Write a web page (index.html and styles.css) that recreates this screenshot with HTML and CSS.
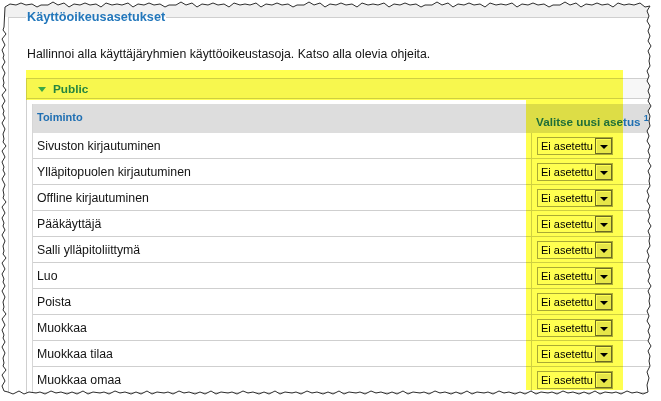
FILE: index.html
```html
<!DOCTYPE html>
<html lang="fi">
<head>
<meta charset="utf-8">
<title>Käyttöoikeusasetukset</title>
<link rel="stylesheet" href="styles.css">
</head>
<body>
<div class="page">
  <fieldset class="perm">
    <legend class="perm-legend">Käyttöoikeusasetukset</legend>
    <p class="intro">Hallinnoi alla käyttäjäryhmien käyttöoikeustasoja. Katso alla olevia ohjeita.</p>
    <div class="panel">
      <div class="panel-head"><span class="tri"></span>Public</div>
      <div class="panel-body">
        <table class="perm-table">
          <thead>
            <tr>
              <th class="th-act">Toiminto</th>
              <th class="th-set">Valitse uusi asetus <sup class="note">1</sup></th>
            </tr>
          </thead>
          <tbody>
            <tr><td class="c-act">Sivuston kirjautuminen</td><td class="c-set"><div class="sel"><span class="sel-text">Ei asetettu</span><span class="sel-btn"></span></div></td></tr>
            <tr><td class="c-act">Ylläpitopuolen kirjautuminen</td><td class="c-set"><div class="sel"><span class="sel-text">Ei asetettu</span><span class="sel-btn"></span></div></td></tr>
            <tr><td class="c-act">Offline kirjautuminen</td><td class="c-set"><div class="sel"><span class="sel-text">Ei asetettu</span><span class="sel-btn"></span></div></td></tr>
            <tr><td class="c-act">Pääkäyttäjä</td><td class="c-set"><div class="sel"><span class="sel-text">Ei asetettu</span><span class="sel-btn"></span></div></td></tr>
            <tr><td class="c-act">Salli ylläpitoliittymä</td><td class="c-set"><div class="sel"><span class="sel-text">Ei asetettu</span><span class="sel-btn"></span></div></td></tr>
            <tr><td class="c-act">Luo</td><td class="c-set"><div class="sel"><span class="sel-text">Ei asetettu</span><span class="sel-btn"></span></div></td></tr>
            <tr><td class="c-act">Poista</td><td class="c-set"><div class="sel"><span class="sel-text">Ei asetettu</span><span class="sel-btn"></span></div></td></tr>
            <tr><td class="c-act">Muokkaa</td><td class="c-set"><div class="sel"><span class="sel-text">Ei asetettu</span><span class="sel-btn"></span></div></td></tr>
            <tr><td class="c-act">Muokkaa tilaa</td><td class="c-set"><div class="sel"><span class="sel-text">Ei asetettu</span><span class="sel-btn"></span></div></td></tr>
            <tr><td class="c-act">Muokkaa omaa</td><td class="c-set"><div class="sel"><span class="sel-text">Ei asetettu</span><span class="sel-btn"></span></div></td></tr>
          </tbody>
        </table>
      </div>
    </div>
  </fieldset>
</div>

<div class="hl hl-head"></div>
<div class="hl hl-col"></div>

<svg class="torn" width="661" height="401" viewBox="0 0 661 401" aria-hidden="true">
  <path class="torn-mask" fill-rule="evenodd" d="M0,0H661V401H0Z M5,7 l5,-3 6,1 5,-2 5,2 6,-1 5,3 l4,-2 7,0 5,-3 5,3 6,-2 5,4 l5,-3 6,1 5,-2 5,2 6,-1 5,3 l5,-4 6,2 5,-1 5,1 6,-2 5,4 l5,-3 6,1 5,-2 5,2 6,-1 5,3 l4,-2 7,0 5,-3 5,3 6,-2 5,4 l5,-3 6,1 5,-2 5,2 6,-1 5,3 l5,-4 6,2 5,-1 5,1 6,-2 5,4 l5,-3 6,1 5,-2 5,2 6,-1 5,3 l4,-2 7,0 5,-3 5,3 6,-2 5,4 l5,-3 6,1 5,-2 5,2 6,-1 5,3 l5,-4 6,2 5,-1 5,1 6,-2 5,4 l5,-3 6,1 5,-2 5,2 6,-1 5,3 l4,-2 7,0 5,-3 5,3 6,-2 5,4 l5,-3 6,1 5,-2 5,2 6,-1 5,3 l5,-4 6,2 5,-1 5,1 6,-2 5,4 l5,-3 6,1 5,-2 5,2 6,-1 5,3 l4,-2 7,0 5,-3 5,3 6,-2 5,4 l5,-3 6,1 5,-2 5,2 6,-1 5,3 l5,-4 6,2 5,-1 5,1 6,-2 5,4 L650,6 l-3,5 2,5 -2,5 3,5 -2,5 2,5 l-2,5 3,5 -3,5 2,5 -1,5 1,5 l-3,5 2,5 -2,5 3,5 -2,5 2,5 l-2,5 3,5 -3,5 2,5 -1,5 1,5 l-3,5 2,5 -2,5 3,5 -2,5 2,5 l-2,5 3,5 -3,5 2,5 -1,5 1,5 l-3,5 2,5 -2,5 3,5 -2,5 2,5 l-2,5 3,5 -3,5 2,5 -1,5 1,5 l-3,5 2,5 -2,5 3,5 -2,5 2,5 l-2,5 3,5 -3,5 2,5 -1,5 1,5 l-3,5 2,5 -2,5 3,5 -2,5 2,5 l-2,5 3,5 -3,5 2,5 -1,5 1,5 l-3,6 2,6 -2,7 1,7 l-5,2 -6,-2 -5,1 -5,-2 -6,3 -5,-2 l-4,1 -7,-1 -5,2 -5,-3 -6,3 -5,-2 l-5,2 -6,-2 -5,1 -5,-2 -6,3 -5,-2 l-4,1 -7,-1 -5,2 -5,-3 -6,3 -5,-2 l-5,2 -6,-2 -5,1 -5,-2 -6,3 -5,-2 l-4,1 -7,-1 -5,2 -5,-3 -6,3 -5,-2 l-5,2 -6,-2 -5,1 -5,-2 -6,3 -5,-2 l-4,1 -7,-1 -5,2 -5,-3 -6,3 -5,-2 l-5,2 -6,-2 -5,1 -5,-2 -6,3 -5,-2 l-4,1 -7,-1 -5,2 -5,-3 -6,3 -5,-2 l-5,2 -6,-2 -5,1 -5,-2 -6,3 -5,-2 l-4,1 -7,-1 -5,2 -5,-3 -6,3 -5,-2 l-5,2 -6,-2 -5,1 -5,-2 -6,3 -5,-2 l-4,1 -7,-1 -5,2 -5,-3 -6,3 -5,-2 l-5,2 -6,-2 -5,1 -5,-2 -6,3 -5,-2 l-4,1 -7,-1 -5,2 -5,-3 -6,3 -5,-2 l-5,2 -6,-2 -5,1 -5,-2 -6,3 -5,-2 l-4,1 -7,-1 -5,2 -5,-3 -6,3 -5,-2 l-5,2 -6,-2 -5,1 -5,-2 -6,3 -5,-2 l-4,1 -7,-1 -5,2 -5,-3 -6,3 -5,-2 L4,391 l-2,-5 3,-5 -3,-6 4,-5 -3,-4 1,-3 l-1,-5 2,-5 -3,-6 3,-5 -2,-4 1,-3 l-2,-5 3,-5 -3,-6 4,-5 -3,-4 1,-3 l-1,-5 2,-5 -3,-6 3,-5 -2,-4 1,-3 l-2,-5 3,-5 -3,-6 4,-5 -3,-4 1,-3 l-1,-5 2,-5 -3,-6 3,-5 -2,-4 1,-3 l-2,-5 3,-5 -3,-6 4,-5 -3,-4 1,-3 l-1,-5 2,-5 -3,-6 3,-5 -2,-4 1,-3 l-2,-5 3,-5 -3,-6 4,-5 -3,-4 1,-3 l-1,-5 2,-5 -3,-6 3,-5 -2,-4 1,-3 l-2,-5 3,-5 -3,-6 4,-5 -3,-4 1,-3 l-1,-5 2,-5 -3,-6 3,-5 -2,-4 1,-3 l-2,-5 3,-5 -3,-6 4,-5 -3,-4 1,-3 Z"/>
  <path class="torn-line" d="M5,7 l5,-3 6,1 5,-2 5,2 6,-1 5,3 l4,-2 7,0 5,-3 5,3 6,-2 5,4 l5,-3 6,1 5,-2 5,2 6,-1 5,3 l5,-4 6,2 5,-1 5,1 6,-2 5,4 l5,-3 6,1 5,-2 5,2 6,-1 5,3 l4,-2 7,0 5,-3 5,3 6,-2 5,4 l5,-3 6,1 5,-2 5,2 6,-1 5,3 l5,-4 6,2 5,-1 5,1 6,-2 5,4 l5,-3 6,1 5,-2 5,2 6,-1 5,3 l4,-2 7,0 5,-3 5,3 6,-2 5,4 l5,-3 6,1 5,-2 5,2 6,-1 5,3 l5,-4 6,2 5,-1 5,1 6,-2 5,4 l5,-3 6,1 5,-2 5,2 6,-1 5,3 l4,-2 7,0 5,-3 5,3 6,-2 5,4 l5,-3 6,1 5,-2 5,2 6,-1 5,3 l5,-4 6,2 5,-1 5,1 6,-2 5,4 l5,-3 6,1 5,-2 5,2 6,-1 5,3 l4,-2 7,0 5,-3 5,3 6,-2 5,4 l5,-3 6,1 5,-2 5,2 6,-1 5,3 l5,-4 6,2 5,-1 5,1 6,-2 5,4 L650,6 l-3,5 2,5 -2,5 3,5 -2,5 2,5 l-2,5 3,5 -3,5 2,5 -1,5 1,5 l-3,5 2,5 -2,5 3,5 -2,5 2,5 l-2,5 3,5 -3,5 2,5 -1,5 1,5 l-3,5 2,5 -2,5 3,5 -2,5 2,5 l-2,5 3,5 -3,5 2,5 -1,5 1,5 l-3,5 2,5 -2,5 3,5 -2,5 2,5 l-2,5 3,5 -3,5 2,5 -1,5 1,5 l-3,5 2,5 -2,5 3,5 -2,5 2,5 l-2,5 3,5 -3,5 2,5 -1,5 1,5 l-3,5 2,5 -2,5 3,5 -2,5 2,5 l-2,5 3,5 -3,5 2,5 -1,5 1,5 l-3,6 2,6 -2,7 1,7 l-5,2 -6,-2 -5,1 -5,-2 -6,3 -5,-2 l-4,1 -7,-1 -5,2 -5,-3 -6,3 -5,-2 l-5,2 -6,-2 -5,1 -5,-2 -6,3 -5,-2 l-4,1 -7,-1 -5,2 -5,-3 -6,3 -5,-2 l-5,2 -6,-2 -5,1 -5,-2 -6,3 -5,-2 l-4,1 -7,-1 -5,2 -5,-3 -6,3 -5,-2 l-5,2 -6,-2 -5,1 -5,-2 -6,3 -5,-2 l-4,1 -7,-1 -5,2 -5,-3 -6,3 -5,-2 l-5,2 -6,-2 -5,1 -5,-2 -6,3 -5,-2 l-4,1 -7,-1 -5,2 -5,-3 -6,3 -5,-2 l-5,2 -6,-2 -5,1 -5,-2 -6,3 -5,-2 l-4,1 -7,-1 -5,2 -5,-3 -6,3 -5,-2 l-5,2 -6,-2 -5,1 -5,-2 -6,3 -5,-2 l-4,1 -7,-1 -5,2 -5,-3 -6,3 -5,-2 l-5,2 -6,-2 -5,1 -5,-2 -6,3 -5,-2 l-4,1 -7,-1 -5,2 -5,-3 -6,3 -5,-2 l-5,2 -6,-2 -5,1 -5,-2 -6,3 -5,-2 l-4,1 -7,-1 -5,2 -5,-3 -6,3 -5,-2 l-5,2 -6,-2 -5,1 -5,-2 -6,3 -5,-2 l-4,1 -7,-1 -5,2 -5,-3 -6,3 -5,-2 L4,391 l-2,-5 3,-5 -3,-6 4,-5 -3,-4 1,-3 l-1,-5 2,-5 -3,-6 3,-5 -2,-4 1,-3 l-2,-5 3,-5 -3,-6 4,-5 -3,-4 1,-3 l-1,-5 2,-5 -3,-6 3,-5 -2,-4 1,-3 l-2,-5 3,-5 -3,-6 4,-5 -3,-4 1,-3 l-1,-5 2,-5 -3,-6 3,-5 -2,-4 1,-3 l-2,-5 3,-5 -3,-6 4,-5 -3,-4 1,-3 l-1,-5 2,-5 -3,-6 3,-5 -2,-4 1,-3 l-2,-5 3,-5 -3,-6 4,-5 -3,-4 1,-3 l-1,-5 2,-5 -3,-6 3,-5 -2,-4 1,-3 l-2,-5 3,-5 -3,-6 4,-5 -3,-4 1,-3 l-1,-5 2,-5 -3,-6 3,-5 -2,-4 1,-3 l-2,-5 3,-5 -3,-6 4,-5 -3,-4 1,-3 Z"/>
</svg>
</body>
</html>
```

FILE: styles.css
```css
html, body {
  margin: 0;
  padding: 0;
  width: 661px;
  height: 401px;
  overflow: hidden;
  background: #fff;
}

body {
  font-family: "Liberation Sans", Arial, sans-serif;
  color: #141414;
  position: relative;
}

.page {
  padding-top: 10px;
  background: linear-gradient(to bottom, #f1f1f1 0, #f1f1f1 17px, #fff 17px);
}

.perm {
  margin: 0 0 0 8px;
  padding: 0 0 0 17px;
  width: 700px;
  border: 1px solid #cfcfcf;
  border-right: 0;
  border-bottom: 0;
  background: #fff;
  min-width: 0;
}

.perm-legend {
  padding: 0 1px;
  font-size: 12.7px;
  line-height: 14px;
  font-weight: bold;
  color: #2377bb;
}

.intro {
  margin: 23px 0 0 1px;
  font-size: 12.3px;
  line-height: 14px;
  color: #141414;
}

.panel {
  margin-top: 17px;
  border: 1px solid #cfcfcf;
  border-right: 0;
  border-bottom: 0;
}

.panel-head {
  height: 19px;
  background: #f7f7f7;
  border-bottom: 1px solid #cfcfcf;
  display: flex;
  align-items: center;
  padding-left: 11px;
  font-size: 11.8px;
  font-weight: bold;
  color: #2585c8;
}

.tri {
  width: 0;
  height: 0;
  border-left: 4px solid transparent;
  border-right: 4px solid transparent;
  border-top: 5px solid #3aa8e0;
  margin-right: 7px;
  margin-top: 1px;
}

.panel-body {
  padding: 5px 0 0 5px;
}

.perm-table {
  border-collapse: separate;
  border-spacing: 0;
  width: 640px;
  border-left: 1px solid #d6d6d6;
}

.perm-table th {
  background: #dddddd;
  height: 29px;
  box-sizing: border-box;
  text-align: left;
  font-weight: bold;
  color: #1f6fb2;
  padding: 0;
}

.th-act {
  width: 498px;
  font-size: 11px;
  padding-left: 4px !important;
  vertical-align: top;
  padding-top: 7px !important;
}

.th-set {
  font-size: 11.7px;
  padding-left: 5px !important;
  vertical-align: bottom;
  padding-bottom: 5px !important;
  white-space: nowrap;
}

.note {
  font-size: 9px;
  color: #1f6fb2;
  vertical-align: 5px;
  line-height: 0;
}

.perm-table td {
  height: 25px;
  padding: 0;
  border-bottom: 1px solid #cfcfcf;
  font-size: 12.3px;
  vertical-align: middle;
}

.c-act {
  padding-left: 4px !important;
}

.c-set {
  padding-left: 5px !important;
  border-left: 1px solid #cfcfcf;
}

.sel {
  display: flex;
  align-items: center;
  width: 76px;
  height: 18px;
  box-sizing: border-box;
  border: 1px solid #a9a9a9;
  background: #fff;
  font-size: 11px;
  color: #000;
}

.sel-text {
  flex: 1;
  padding-left: 3px;
  white-space: nowrap;
}

.sel-btn {
  width: 17px;
  height: 16px;
  box-sizing: border-box;
  border: 1px solid #6b6b6b;
  box-shadow: inset 1px 1px 0 #fff;
  background: #e6e6e6;
  display: flex;
  align-items: flex-end;
  justify-content: center;
  padding-bottom: 4px;
}

.sel-btn::after {
  content: "";
  width: 0;
  height: 0;
  border-left: 4px solid transparent;
  border-right: 4px solid transparent;
  border-top: 4px solid #000;
}

.hl {
  position: absolute;
  background: #ffff50;
  mix-blend-mode: multiply;
  z-index: 5;
}

.hl-head {
  left: 26px;
  top: 70px;
  width: 597px;
  height: 30px;
}

.hl-col {
  left: 526px;
  top: 100px;
  width: 97px;
  height: 290px;
}

.torn {
  position: absolute;
  left: 0;
  top: 0;
  z-index: 10;
  pointer-events: none;
}

.torn-mask {
  fill: #fff;
}

.torn-line {
  fill: none;
  stroke: #2e2e2e;
  stroke-width: 1;
}
```
